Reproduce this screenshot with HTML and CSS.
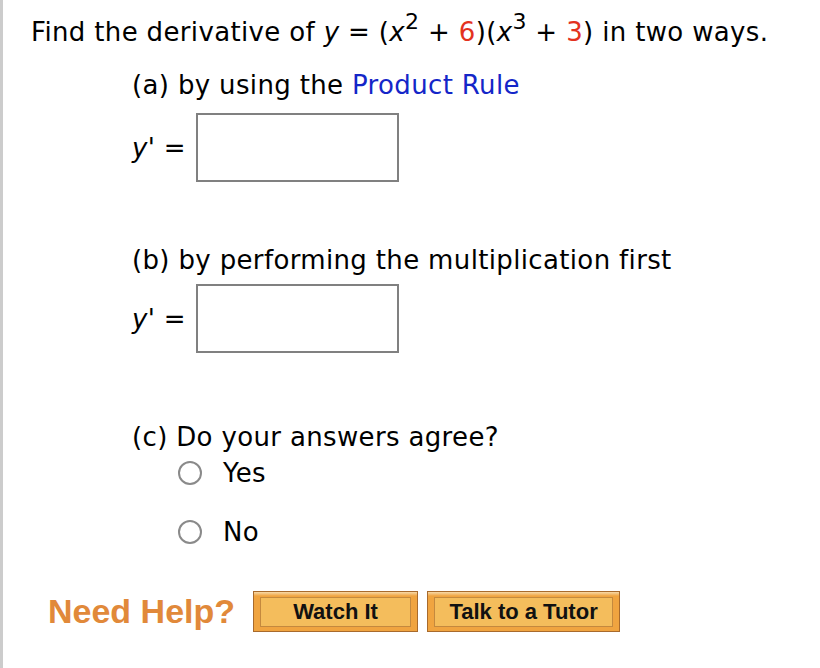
FILE: index.html
```html
<!DOCTYPE html>
<html>
<head>
<meta charset="utf-8">
<link rel="stylesheet" href="styles.css">
</head>
<body>
<div class="page">
  <p class="q">Find the derivative of <i>y</i> = (<i>x</i><sup>2</sup> + <span class="red">6</span>)(<i>x</i><sup>3</sup> + <span class="red">3</span>) in two ways.</p>

  <div class="part">
    <p class="sub">(a) by using the <span class="link">Product Rule</span></p>
    <div class="ans ans-a">
      <span class="lbl"><i>y</i>' =</span>
      <span class="box"></span>
    </div>
  </div>

  <div class="part part-b">
    <p class="sub">(b) by performing the multiplication first</p>
    <div class="ans ans-b">
      <span class="lbl"><i>y</i>' =</span>
      <span class="box"></span>
    </div>
  </div>

  <div class="part part-c">
    <p class="sub">(c) Do your answers agree?</p>
    <label class="opt opt-yes"><span class="radio"></span><span>Yes</span></label>
    <label class="opt opt-no"><span class="radio"></span><span>No</span></label>
  </div>

  <div class="help">
    <span class="need">Need Help?</span>
    <span class="btn btn-watch"><span class="btn-in">Watch It</span></span>
    <span class="btn btn-tutor"><span class="btn-in">Talk to a Tutor</span></span>
  </div>
</div>
</body>
</html>
```

FILE: styles.css
```css
html, body {
  margin: 0;
  padding: 0;
  background: #fff;
}
.page {
  box-sizing: border-box;
  height: 668px;
  border-left: 3px solid #cccccc;
  padding: 17px 0 0 28px;
  font-family: "DejaVu Sans", Verdana, sans-serif;
  font-size: 26px;
  line-height: 30px;
  letter-spacing: 0.35px;
  color: #000;
}
p { margin: 0; }
i { font-style: italic; }
.q { height: 30px; white-space: nowrap; }
.q sup {
  font-size: 22px;
  line-height: 0;
  vertical-align: 12px;
}
.red { color: #e3321f; }
.link { color: #1426c8; }

.part { padding-left: 101px; }
.part > .sub { margin-top: 23px; }
.part-b > .sub { margin-top: 63px; }
.part-c > .sub { margin-top: 69px; }

.ans {
  display: flex;
  align-items: center;
  gap: 10px;
}
.ans-a { margin-top: 13px; }
.ans-b { margin-top: 9px; }
.lbl { white-space: pre; }
.box {
  display: block;
  box-sizing: border-box;
  width: 203px;
  height: 69px;
  border: 2px solid #808080;
  background: #fff;
}

.opt {
  display: flex;
  align-items: center;
  gap: 21px;
  padding-left: 46px;
  height: 30px;
}
.opt-yes { margin-top: 6px; }
.opt-no { margin-top: 29px; }
.radio {
  display: block;
  box-sizing: border-box;
  width: 24px;
  height: 24px;
  border: 2px solid #8a8a8a;
  border-radius: 50%;
  background: #fff;
}

.help {
  display: flex;
  align-items: center;
  margin-top: 44px;
  padding-left: 17px;
  font-family: "Liberation Sans", Arial, sans-serif;
  letter-spacing: 0;
}
.need {
  font-weight: bold;
  font-size: 34px;
  color: #e1893a;
  margin-right: 18px;
  line-height: 41px;
}
.btn {
  box-sizing: border-box;
  height: 41px;
  padding: 5px 6px 4px 6px;
  border: 1px solid #a86a2c;
  background: linear-gradient(#f7d9a8 0px, #f0a440 4px, #f0a440 100%);
  display: flex;
  margin-right: 9px;
}
.btn-in {
  flex: 1;
  display: flex;
  align-items: center;
  justify-content: center;
  border: 1px solid #c4893e;
  background: #f4bd5c;
  font-weight: bold;
  font-size: 22px;
  color: #111;
}
.btn-watch { width: 165px; }
.btn-tutor { width: 193px; }
```
